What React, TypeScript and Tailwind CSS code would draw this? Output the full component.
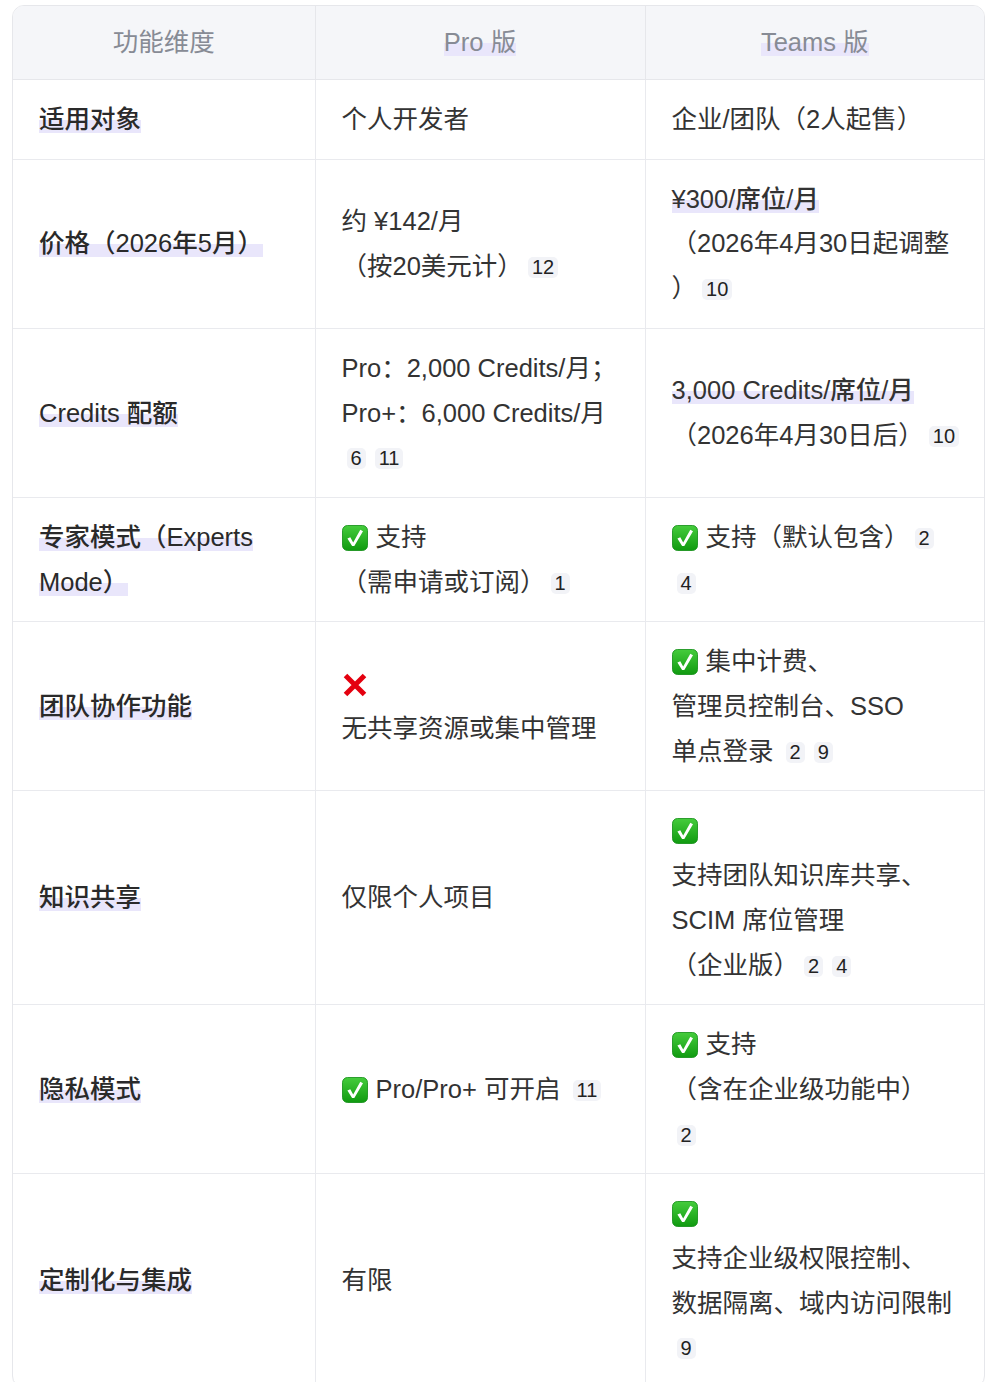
import type { ReactNode } from "react";

const hl = "bg-[linear-gradient(transparent_53%,#e9e6fb_53%)] box-decoration-clone";

function Check({ br = false }: { br?: boolean }) {
  return (
    <svg
      viewBox="0 0 26 26"
      className={"inline-block w-[26px] h-[26px] align-[-5px] " + (br ? "" : "mr-[8px]")}
    >
      <defs>
        <linearGradient id="ck" x1="0" y1="0" x2="0" y2="1">
          <stop offset="0" stopColor="#45cc3c" />
          <stop offset="1" stopColor="#109a10" />
        </linearGradient>
      </defs>
      <rect x="0.5" y="0.5" width="25" height="25" rx="5" fill="url(#ck)" stroke="#0e8c12" strokeWidth="0.8" />
      <polygon points="5.4,13.4 8.3,12.2 11.2,17.4 18.3,4.8 21,6.3 12.3,21 10.1,21" fill="#fff" />
    </svg>
  );
}

function Cross() {
  return (
    <svg viewBox="0 0 26 26" className="inline-block w-[26px] h-[26px] align-[-5px]">
      <path d="M3.5 3.5 L22.5 22.5 M22.5 3.5 L3.5 22.5" stroke="#e4000f" strokeWidth="5" strokeLinecap="butt" />
    </svg>
  );
}

function Ref({ n }: { n: string }) {
  return (
    <span className="inline-block ml-[5px] mr-[4px] px-[4px] rounded-[5px] bg-[#f2f3f7] text-[20px] leading-[21px] text-[#222] align-[1px]">
      {n}
    </span>
  );
}

type Row = { label: ReactNode; pro: ReactNode; teams: ReactNode };

const rows: Row[] = [
  {
    label: "适用对象",
    pro: "个人开发者",
    teams: "企业/团队（2人起售）",
  },
  {
    label: "价格（2026年5月）",
    pro: (
      <>
        约 ¥142/月
        <br />
        （按20美元计）<Ref n="12" />
      </>
    ),
    teams: (
      <>
        <span className={hl + " font-medium"}>¥300/席位/月</span>
        <br />
        （2026年4月30日起调整
        <br />）<Ref n="10" />
      </>
    ),
  },
  {
    label: "Credits 配额",
    pro: (
      <>
        Pro：2,000 Credits/月；
        <br />
        Pro+：6,000 Credits/月
        <br />
        <Ref n="6" />
        <Ref n="11" />
      </>
    ),
    teams: (
      <>
        <span className={hl + " font-medium"}>3,000 Credits/席位/月</span>
        <br />
        <span className="whitespace-nowrap">
          （2026年4月30日后）<Ref n="10" />
        </span>
      </>
    ),
  },
  {
    label: "专家模式（Experts Mode）",
    pro: (
      <>
        <Check />
        支持
        <br />
        （需申请或订阅）<Ref n="1" />
      </>
    ),
    teams: (
      <>
        <Check />
        支持（默认包含）<Ref n="2" />
        <br />
        <Ref n="4" />
      </>
    ),
  },
  {
    label: "团队协作功能",
    pro: (
      <>
        <Cross />
        <br />
        无共享资源或集中管理
      </>
    ),
    teams: (
      <>
        <Check />
        集中计费、
        <br />
        管理员控制台、SSO
        <br />
        单点登录 <Ref n="2" />
        <Ref n="9" />
      </>
    ),
  },
  {
    label: "知识共享",
    pro: "仅限个人项目",
    teams: (
      <>
        <Check br />
        <br />
        支持团队知识库共享、
        <br />
        SCIM 席位管理
        <br />
        （企业版）<Ref n="2" />
        <Ref n="4" />
      </>
    ),
  },
  {
    label: "隐私模式",
    pro: (
      <>
        <Check />
        Pro/Pro+ 可开启 <Ref n="11" />
      </>
    ),
    teams: (
      <>
        <Check />
        支持
        <br />
        （含在企业级功能中）
        <br />
        <Ref n="2" />
      </>
    ),
  },
  {
    label: "定制化与集成",
    pro: "有限",
    teams: (
      <>
        <Check br />
        <br />
        支持企业级权限控制、
        <br />
        数据隔离、域内访问限制
        <br />
        <Ref n="9" />
      </>
    ),
  },
];

export default function App() {
  return (
    <div className="min-h-screen bg-white pt-[5px] pl-[12px] pr-[1px] [font-family:'Liberation_Sans','Noto_Sans_CJK_SC',sans-serif] text-[#333]">
      <div className="border border-[#e6e7eb] rounded-[12px] overflow-hidden">
        <table className="w-full table-fixed border-collapse">
          <colgroup>
            <col className="w-[302px]" />
            <col className="w-[330px]" />
            <col />
          </colgroup>
          <thead>
            <tr className="bg-[#f5f6f9] border-b border-[#e6e7eb]">
              <th className="py-[17px] px-[26px] text-[25.5px] leading-[39px] font-normal text-[#878b95] text-center">
                功能维度
              </th>
              <th className="py-[17px] px-[26px] text-[25.5px] leading-[39px] font-normal text-[#878b95] text-center border-l border-[#e6e7eb]">
                <span className={hl}>Pro 版</span>
              </th>
              <th className="py-[17px] px-[26px] text-[25.5px] leading-[39px] font-normal text-[#878b95] text-center border-l border-[#e6e7eb]">
                <span className={hl}>Teams 版</span>
              </th>
            </tr>
          </thead>
          <tbody>
            {rows.map((r, i) => (
              <tr key={i} className="border-b border-[#e9eaee] last:border-b-0">
                <td className="py-[17px] px-[26px] text-[25.5px] leading-[44.7px] align-middle font-medium text-[#2a2a2a]">
                  <span className={hl}>{r.label}</span>
                </td>
                <td className="py-[17px] px-[26px] text-[25.5px] leading-[44.7px] align-middle border-l border-[#e9eaee]">
                  {r.pro}
                </td>
                <td className="py-[17px] px-[26px] text-[25.5px] leading-[44.7px] align-middle border-l border-[#e9eaee]">
                  {r.teams}
                </td>
              </tr>
            ))}
          </tbody>
        </table>
      </div>
    </div>
  );
}
